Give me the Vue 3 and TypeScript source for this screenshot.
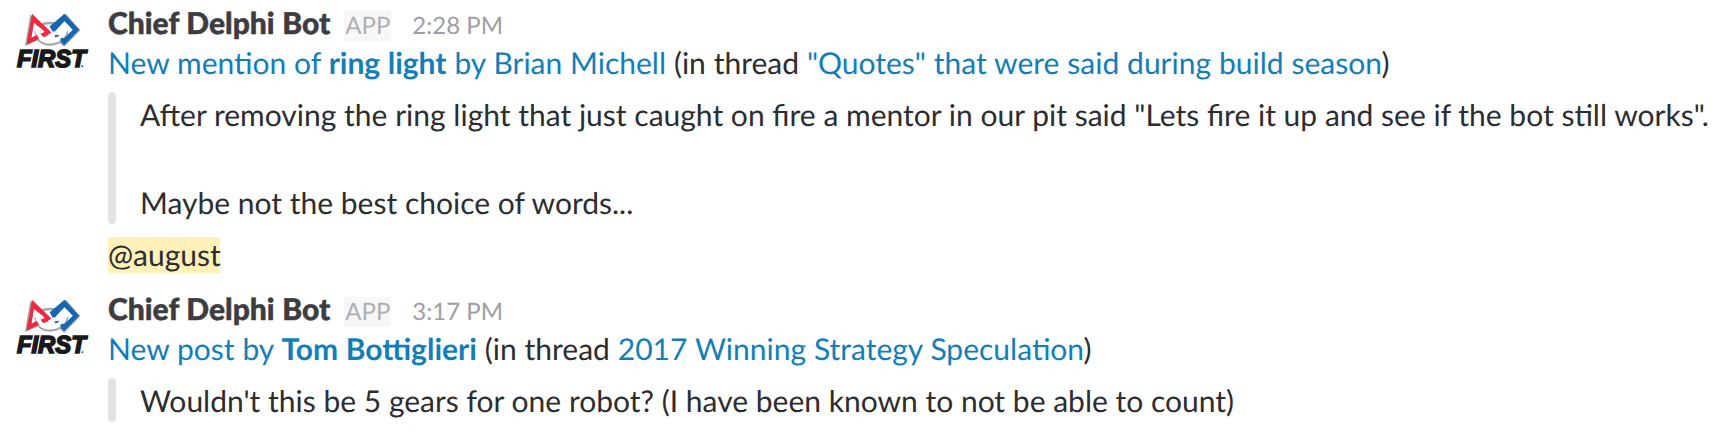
<script setup lang="ts">
interface Part { text: string; link?: boolean; bold?: boolean }
interface Message { time: string; title: Part[]; quote: string[]; mention?: string }
const messages: Message[] = [
  {
    time: '2:28 PM',
    title: [
      { text: 'New mention of ', link: true }, { text: 'ring light', link: true, bold: true },
      { text: ' by Brian Michell', link: true }, { text: ' (in thread ' },
      { text: '"Quotes" that were said during build season', link: true }, { text: ')' },
    ],
    quote: [
      'After removing the ring light that just caught on fire a mentor in our pit said "Lets fire it up and see if the bot still works".',
      '', 'Maybe not the best choice of words...',
    ],
    mention: '@august',
  },
  {
    time: '3:17 PM',
    title: [
      { text: 'New post by ', link: true }, { text: 'Tom Bottiglieri', link: true, bold: true },
      { text: ' (in thread ' }, { text: '2017 Winning Strategy Speculation', link: true }, { text: ')' },
    ],
    quote: ["Wouldn't this be 5 gears for one robot? (I have been known to not be able to count)"],
  },
]
</script>

<template>
  <main class="chat">
    <article v-for="m in messages" :key="m.time" class="message">
      <svg class="avatar" viewBox="45 36 225 192" width="75" height="64">
        <path d="M91 43 L75 138 L158 102 Z M190 46 L199 42 L241 91 L193 140 L164 116 Z" fill="#a3a5a8" />
        <path d="M120 76 Q150 62 184 76" fill="none" stroke="#a3a5a8" stroke-width="8" />
        <path d="M97 42 L155 99 L80 133 Z" fill="#ed2940" />
        <path d="M101 68 L94 114 L135 95 Z" fill="#fff" />
        <path d="M193 42 L237 89 L192 135 L165 109 L149 79 Z" fill="#1767b0" />
        <path d="M193 61 L219 89 L193 116 L175 101 L164 94 Z" fill="#fff" />
        <g fill="none">
          <path d="M113 92 C110 140 188 140 197 92" stroke="#a3a5a8" stroke-width="18" />
          <path d="M114 90 C111 135 185 135 195 90" stroke="#fff" stroke-width="14" />
        </g>
        <path d="M102 94 L113 79 L130 94 Z M182 91 L198 76 L207 94 Z" fill="#fff" />
        <path d="M119 70 L130 75 L155 99 L142 105 L130 91 Z" fill="#ed2940" />
        <path d="M97 42 L102 66 L91 128 L80 133 Z" fill="#ed2940" />
        <path d="M91 115 L111 105 L117 116 L80 133 Z" fill="#ed2940" />
        <path d="M144 104 L160 94 L173 96 L188 82 L192 92 L178 104 L161 106 L150 111 Z" fill="#fff" />
        <path d="M149 79 L165 94 L193 64 L219 89 L187 120 L196 131 L237 89 L193 42 L160 76 Z" fill="#1767b0" />
        <path d="M180 119 L187 112 L199 124 L192 135 Z" fill="#1767b0" />
        <text x="51" y="202" textLength="206" lengthAdjust="spacingAndGlyphs" class="brand">FIRST</text>
        <circle cx="247" cy="199" r="3" fill="#555" />
      </svg>
      <div class="body">
        <header><b class="name">Chief Delphi Bot</b><span class="app">APP</span><time>{{ m.time }}</time></header>
        <p class="title"><span v-for="(p, i) in m.title" :key="i" :class="{ link: p.link, bold: p.bold }">{{ p.text }}</span></p>
        <blockquote><p v-for="(q, i) in m.quote" :key="i">{{ q }}</p></blockquote>
        <p v-if="m.mention"><span class="mention">{{ m.mention }}</span></p>
      </div>
    </article>
  </main>
</template>

<style>
body { background: #fff; }
</style>
<style scoped>
.chat { box-sizing: border-box; padding-top: 1px; font: 30px/44px Lato, sans-serif; color: #2c2d30; height: 434px; overflow: hidden; text-rendering: geometricPrecision; }
.message { display: flex; height: 286px; }
.avatar { flex: none; margin: 11px 18px 0 15px; overflow: visible; }
.brand { font: italic 700 74px "Liberation Sans", sans-serif; fill: #19191b; stroke: #19191b; stroke-width: 5px; }
p { margin: 0; white-space: pre; min-height: 44px; }
header { display: flex; align-items: baseline; height: 40px; }
.name { font-weight: 900; color: #3d3c40; word-spacing: .5px; -webkit-text-stroke: .5px #3d3c40; }
.app { font-size: 24px; line-height: 30px; color: #b0b0b3; background: #f7f7f7; padding: 0 1px; margin-left: 14px; }
time { font-size: 24px; color: #9e9ea6; margin-left: 21px; }
.title { word-spacing: .2px; }
.link { color: #127eb9; }
.bold { font-weight: 700; }
blockquote { margin: 8px 0; padding-left: 24px; position: relative; border-left: 8px solid transparent; word-spacing: .04px; }
blockquote::before { content: ""; position: absolute; left: -8px; top: -1px; bottom: 1px; width: 8px; border-radius: 4px; background: #e3e4e6; }
.mention { display: inline-block; line-height: 36px; background: linear-gradient(#fff1b8, #fff1b8) 0 0 / 112px 36px no-repeat; }
</style>
